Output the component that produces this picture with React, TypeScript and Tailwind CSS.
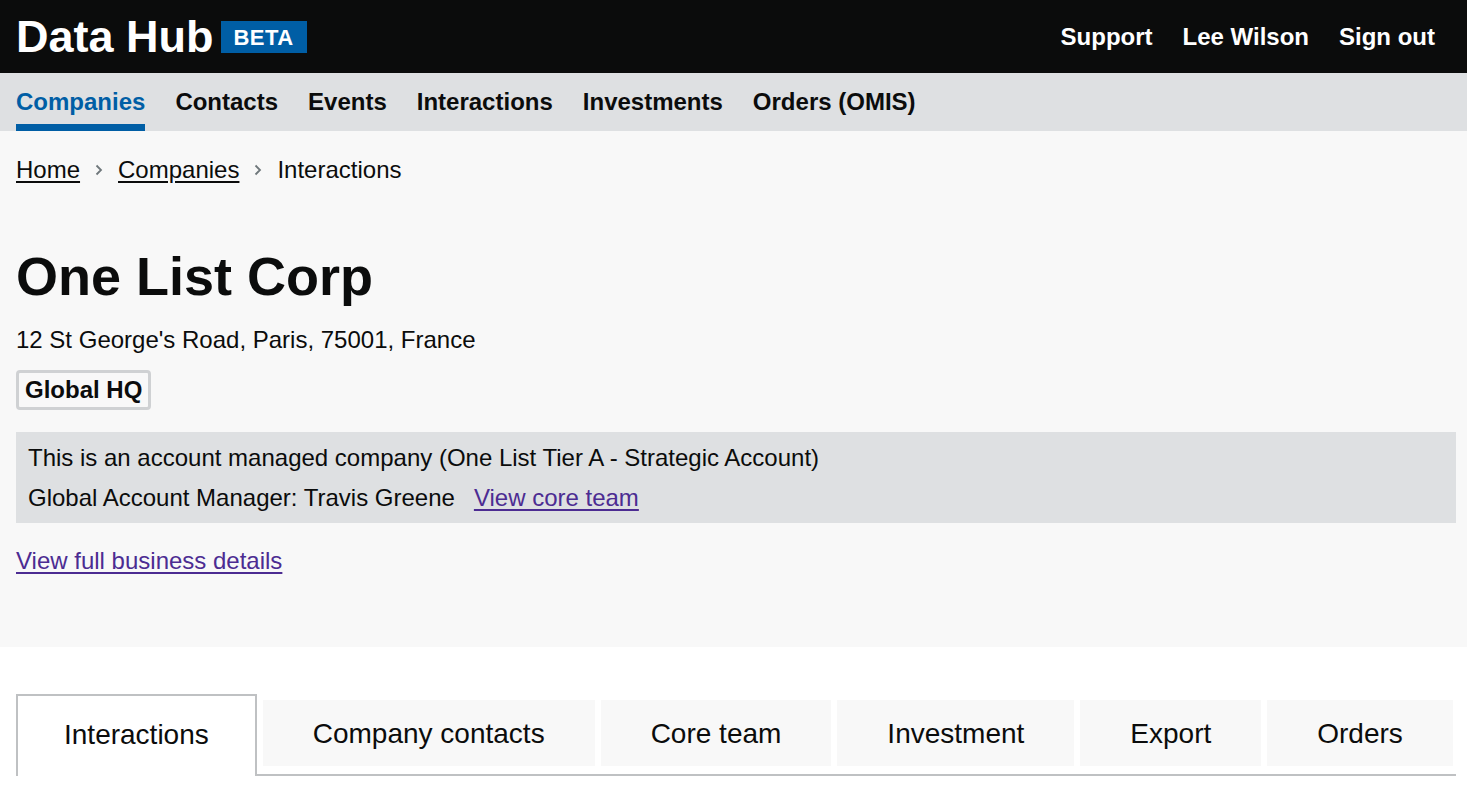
import React from "react";

const navItems = ["Companies", "Contacts", "Events", "Interactions", "Investments", "Orders (OMIS)"];
const tabs = ["Interactions", "Company contacts", "Core team", "Investment", "Export", "Orders"];

const Chevron: React.FC = () => (
  <svg width="8" height="12" viewBox="0 0 8 12" className="mx-[15px]" aria-hidden>
    <path d="M1.5 1.5 L6 6 L1.5 10.5" fill="none" stroke="#6f777b" strokeWidth="1.8" />
  </svg>
);

const App: React.FC = () => {
  const activeNav = "Companies";
  const activeTab = "Interactions";

  return (
    <div className="min-h-screen bg-white text-[#0b0c0c] font-['Liberation_Sans',Arial,sans-serif]">
      {/* Masthead */}
      <header className="h-[73px] bg-[#0b0c0c] flex items-center justify-between pl-4 pr-[32px]">
        <div className="flex items-center">
          <span className="text-white font-bold text-[45px] leading-none -mt-[1px]">Data Hub</span>
          <span className="ml-[7px] w-[86px] h-[32px] pt-[3px] flex items-center justify-center bg-[#005ea5] text-white font-bold text-[22px] leading-[26px] tracking-[0.5px]">
            BETA
          </span>
        </div>
        <nav className="flex items-center gap-[30px] text-white font-bold text-[24px] leading-[28px]">
          <a>Support</a>
          <a>Lee Wilson</a>
          <a>Sign out</a>
        </nav>
      </header>

      {/* Main navigation */}
      <nav className="h-[58px] bg-[#dee0e2] px-4">
        <ul className="flex gap-[30px] h-full">
          {navItems.map((item) => (
            <li
              key={item}
              className={
                item === activeNav
                  ? "pt-[15px] pb-[8px] border-b-[7px] border-[#005ea5] text-[#005ea5] font-bold text-[24px] leading-[28px]"
                  : "pt-[15px] pb-[8px] border-b-[7px] border-transparent font-bold text-[24px] leading-[28px]"
              }
            >
              {item}
            </li>
          ))}
        </ul>
      </nav>

      {/* Local header */}
      <section className="bg-[#f8f8f8] pl-4 pr-[11px] pt-[25px] pb-[72px]">
        <div className="flex items-center text-[24px] leading-[28px]">
          <a className="underline underline-offset-[3px]">Home</a>
          <Chevron />
          <a className="underline underline-offset-[3px]">Companies</a>
          <Chevron />
          <span>Interactions</span>
        </div>

        <h1 className="mt-[63px] font-bold text-[54px] leading-[59px]">One List Corp</h1>
        <p className="mt-[20px] text-[24px] leading-[28px]">12 St George's Road, Paris, 75001, France</p>

        <div className="mt-[16px]">
          <span className="inline-block border-[3px] border-[#cfd1d3] rounded-[4px] px-[6px] py-[3px] font-bold text-[24px] leading-[28px] bg-[#f8f8f8]">
            Global HQ
          </span>
        </div>

        <div className="mt-[22px] bg-[#dee0e2] px-[12px] pt-[6px] pb-[5px] text-[24px] leading-[40px]">
          <p>This is an account managed company (One List Tier A - Strategic Account)</p>
          <p>
            Global Account Manager: Travis Greene
            <a className="ml-[19px] text-[#4c2c92] underline underline-offset-[3px]">View core team</a>
          </p>
        </div>

        <a className="block mt-[24px] w-fit text-[#4c2c92] text-[24px] leading-[28px] underline underline-offset-[3px]">
          View full business details
        </a>
      </section>

      {/* Tabs */}
      <div className="pl-4 pr-[11px] pt-[47px]">
        <ul className="flex items-end gap-[6px] border-b-2 border-[#bfc1c3]">
          {tabs.map((tab) =>
            tab === activeTab ? (
              <li
                key={tab}
                className="h-[82px] -mb-[2px] flex items-center pb-[2px] px-[46px] bg-white border-2 border-b-0 border-[#bfc1c3] text-[28px] leading-[32px]"
              >
                {tab}
              </li>
            ) : (
              <li
                key={tab}
                className="h-[66px] mb-[8px] flex items-center pt-[2px] px-[50px] bg-[#f8f8f8] text-[28px] leading-[32px]"
              >
                {tab}
              </li>
            )
          )}
        </ul>
      </div>
    </div>
  );
};

export default App;
